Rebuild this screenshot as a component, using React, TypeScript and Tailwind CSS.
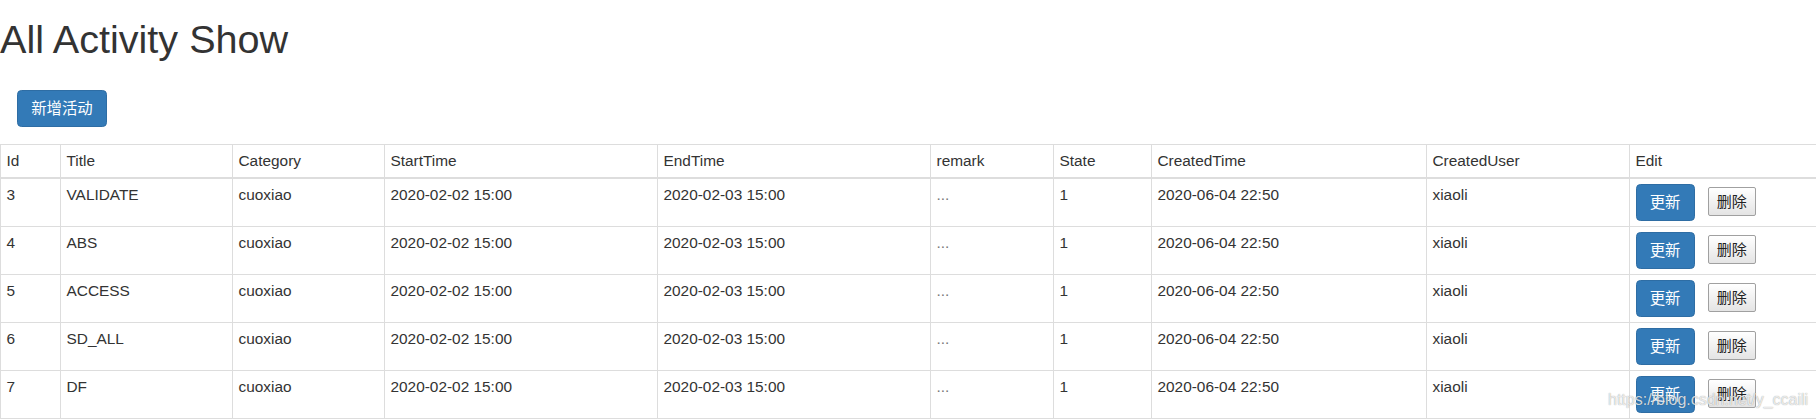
import React from "react";

const rows = [
  { id: 3, title: "VALIDATE" },
  { id: 4, title: "ABS" },
  { id: 5, title: "ACCESS" },
  { id: 6, title: "SD_ALL" },
  { id: 7, title: "DF" },
];

const headers = [
  "Id",
  "Title",
  "Category",
  "StartTime",
  "EndTime",
  "remark",
  "State",
  "CreatedTime",
  "CreatedUser",
  "Edit",
];

export default function App() {
  return (
    <div className="relative w-[1816px] h-[419px] overflow-hidden bg-white text-[#333] font-['Liberation_Sans','Noto_Sans_CJK_SC',sans-serif]">
      <h1 className="mt-[17.5px] text-[39.6px] leading-[1.1] font-normal">All Activity Show</h1>
      <div className="mt-[29px] pl-[17px]">
        <button className="h-[37px] px-[13.2px] flex items-center rounded-[4.4px] bg-[#337ab7] border border-[#2e6da4] text-white text-[15.4px] leading-[22px]">
          新增活动
        </button>
      </div>
      <div className="mt-[17px] border-l border-t border-[#ddd] grid grid-cols-[60px_172px_152px_273px_273px_123px_98px_275px_203px_186px] text-[15.4px] leading-[22px]">
        {headers.map((h, i) => (
          <div
            key={h}
            className={
              i === 9
                ? "px-[5.5px] pt-[5px] pb-[5px] border-b-2 border-[#ddd]"
                : "px-[5.5px] pt-[5px] pb-[5px] border-b-2 border-r border-[#ddd]"
            }
          >
            {h}
          </div>
        ))}
        {rows.map((r) => (
          <React.Fragment key={r.id}>
            <div className="h-[48px] px-[5.5px] pt-[5px] border-b border-r border-[#ddd]">{r.id}</div>
            <div className="h-[48px] px-[5.5px] pt-[5px] border-b border-r border-[#ddd]">{r.title}</div>
            <div className="h-[48px] px-[5.5px] pt-[5px] border-b border-r border-[#ddd]">cuoxiao</div>
            <div className="h-[48px] px-[5.5px] pt-[5px] border-b border-r border-[#ddd]">2020-02-02 15:00</div>
            <div className="h-[48px] px-[5.5px] pt-[5px] border-b border-r border-[#ddd]">2020-02-03 15:00</div>
            <div className="h-[48px] px-[5.5px] pt-[5px] border-b border-r border-[#ddd] text-[#777]">...</div>
            <div className="h-[48px] px-[5.5px] pt-[5px] border-b border-r border-[#ddd]">1</div>
            <div className="h-[48px] px-[5.5px] pt-[5px] border-b border-r border-[#ddd]">2020-06-04 22:50</div>
            <div className="h-[48px] px-[5.5px] pt-[5px] border-b border-r border-[#ddd]">xiaoli</div>
            <div className="h-[48px] px-[5.5px] pt-[5px] border-b border-[#ddd] flex items-start">
              <button className="h-[37px] px-[13.2px] flex items-center rounded-[4.4px] bg-[#337ab7] border border-[#2e6da4] text-white text-[15.4px] leading-[22px]">
                更新
              </button>
              <button className="ml-[13px] mt-[3px] h-[29px] px-[8px] flex items-center rounded-[2px] border border-[#a0a0a0] bg-linear-to-b from-white to-[#e4e4e4] text-[#222] text-[15px] leading-[20px]">
                删除
              </button>
            </div>
          </React.Fragment>
        ))}
      </div>
      <div className="absolute left-[1608px] top-[391px] text-[16px] leading-[1.15] text-[rgba(255,255,255,0.8)] [text-shadow:0_0_1px_rgba(0,0,0,0.45)] pointer-events-none whitespace-nowrap">
        https://blog.csdn.net/y_ccaili
      </div>
    </div>
  );
}
